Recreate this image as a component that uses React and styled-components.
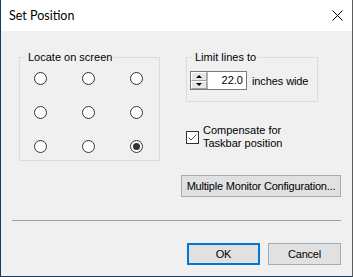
import React from "react";
import styled, { createGlobalStyle } from "styled-components";

const Global = createGlobalStyle`
html, body {
  margin: 0;
  padding: 0;
  background: #f0f0f0;
}
`;

const Window = styled.div`
width: 353px;
height: 277px;
box-sizing: border-box;
background: #f0f0f0;
border-left: 1px solid #1c3b5a;
border-right: 1px solid #5c5c5c;
border-bottom: 1px solid #1c3b5a;
display: flex;
flex-direction: column;
font-family: "Liberation Sans", Arial, sans-serif;
font-size: 11px;
color: #000;
overflow: hidden;
`;

const TitleBar = styled.div`
height: 31px;
flex: none;
background: #fff;
display: flex;
align-items: center;
justify-content: space-between;
padding: 0 9px 0 8px;
`;

const Title = styled.span`
font-family: Lato, "Noto Sans", sans-serif;
font-size: 12.5px;
color: #000;
margin-top: -1px;
`;

const Body = styled.div`
padding: 20px 11px 0 11px;
display: flex;
flex-direction: column;
`;

const TopRow = styled.div`
display: flex;
align-items: flex-start;
padding-left: 7px;
`;

const Group = styled.div`
width: ${(p) => p.$width}px;
flex: none;
`;

const GroupHead = styled.div`
display: flex;
align-items: center;
height: 13px;
line-height: 13px;
&::before {
  content: "";
  width: 6px;
  height: 1px;
  background: #dcdcdc;
}
&::after {
  content: "";
  flex: 1;
  height: 1px;
  background: #dcdcdc;
}
& > span {
  padding: 0 2px 0 3px;
}
`;

const GroupBody = styled.div`
border: 1px solid #dcdcdc;
border-top: none;
margin-top: -6px;
padding: ${(p) => p.$pad};
`;

const RadioGrid = styled.div`
display: grid;
grid-template-columns: repeat(3, 13px);
grid-auto-rows: 13px;
column-gap: 35px;
row-gap: 21px;
`;

const Radio = styled.span`
width: 13px;
height: 13px;
box-sizing: border-box;
border-radius: 50%;
border: 1px solid #333;
background: #fff;
display: flex;
align-items: center;
justify-content: center;
&::after {
  content: "";
  display: ${(p) => (p.$on ? "block" : "none")};
  width: 7px;
  height: 7px;
  border-radius: 50%;
  background: #333;
}
`;

const RightCol = styled.div`
display: flex;
flex-direction: column;
margin-left: 26px;
`;

const SpinRow = styled.div`
display: flex;
align-items: center;
`;

const Spinner = styled.div`
display: flex;
height: 19px;
width: 57px;
box-sizing: border-box;
border: 1px solid #7a7a7a;
background: #fff;
`;

const SpinButtons = styled.div`
width: 16px;
display: flex;
flex-direction: column;
border-right: 1px solid #b5b5b5;
background: #e6e6e6;
`;

const SpinHalf = styled.div`
flex: 1;
display: flex;
align-items: center;
justify-content: center;
border: 1px solid #fff;
border-right-color: #a0a0a0;
border-bottom-color: #a0a0a0;
&:first-child {
  border-bottom: 1px solid #a0a0a0;
}
&::after {
  content: "";
  border-left: 3px solid transparent;
  border-right: 3px solid transparent;
  ${(p) =>
    p.$up ? "border-bottom: 3px solid #000;" : "border-top: 3px solid #000;"}
}
`;

const SpinValue = styled.div`
flex: 1;
text-align: right;
padding-right: 3px;
line-height: 17px;
`;

const Unit = styled.span`
margin-left: 5px;
letter-spacing: -0.1px;
`;

const CheckRow = styled.label`
display: flex;
align-items: center;
margin-top: 22px;
line-height: 13px;
`;

const Check = styled.span`
width: 13px;
height: 13px;
box-sizing: border-box;
border: 1px solid #333;
background: #fff;
flex: none;
display: flex;
align-items: center;
justify-content: center;
margin-right: 4px;
`;

const Button = styled.button`
font-family: "Liberation Sans", Arial, sans-serif;
font-size: 11px;
letter-spacing: -0.2px;
color: #000;
height: 22px;
width: ${(p) => p.$width}px;
box-sizing: border-box;
background: #e1e1e1;
border: ${(p) => (p.$default ? "2px solid #0078d7" : "1px solid #a3abb5")};
padding: 0;
margin: 0;
`;

const MonitorRow = styled.div`
display: flex;
justify-content: flex-end;
margin-top: 14px;
`;

const Separator = styled.div`
height: 1px;
background: #a0a0a0;
margin-top: 23px;
`;

const Buttons = styled.div`
display: flex;
justify-content: flex-end;
gap: 8px;
margin-top: 22px;
`;

export default function App() {
  const cells = [0, 1, 2, 3, 4, 5, 6, 7, 8];
  return (
    <>
      <Global />
      <Window>
        <TitleBar>
          <Title>Set Position</Title>
          <svg width="11" height="11" viewBox="0 0 11 11">
            <path d="M0.5 0.5 L10.5 10.5 M10.5 0.5 L0.5 10.5" stroke="#000" strokeWidth="1" />
          </svg>
        </TitleBar>
        <Body>
          <TopRow>
            <Group $width={141}>
              <GroupHead>
                <span>Locate on screen</span>
              </GroupHead>
              <GroupBody $pad="14px 0 7px 14px">
                <RadioGrid>
                  {cells.map((i) => (
                    <Radio key={i} $on={i === 8} />
                  ))}
                </RadioGrid>
              </GroupBody>
            </Group>
            <RightCol>
              <Group $width={132}>
                <GroupHead>
                  <span>Limit lines to</span>
                </GroupHead>
                <GroupBody $pad="13px 0 11px 3px">
                  <SpinRow>
                    <Spinner>
                      <SpinButtons>
                        <SpinHalf $up />
                        <SpinHalf />
                      </SpinButtons>
                      <SpinValue>22.0</SpinValue>
                    </Spinner>
                    <Unit>inches wide</Unit>
                  </SpinRow>
                </GroupBody>
              </Group>
              <CheckRow>
                <Check>
                  <svg width="11" height="11" viewBox="0 0 11 11">
                    <path d="M1.5 5.5 L4 8 L9.5 2.5" fill="none" stroke="#555" strokeWidth="1" />
                  </svg>
                </Check>
                <span>
                  Compensate for
                  <br />
                  Taskbar position
                </span>
              </CheckRow>
            </RightCol>
          </TopRow>
          <MonitorRow>
            <Button $width={160}>Multiple Monitor Configuration...</Button>
          </MonitorRow>
          <Separator />
          <Buttons>
            <Button $width={73} $default>OK</Button>
            <Button $width={73}>Cancel</Button>
          </Buttons>
        </Body>
      </Window>
    </>
  );
}
